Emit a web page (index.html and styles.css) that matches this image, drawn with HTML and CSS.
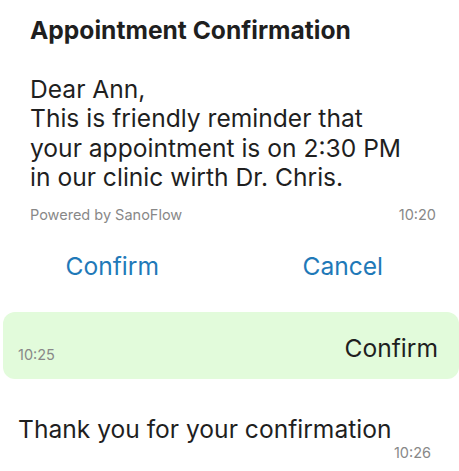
FILE: index.html
```html
<!DOCTYPE html>
<html lang="en">
<head>
  <meta charset="UTF-8">
  <title>Appointment Confirmation</title>
  <link rel="stylesheet" href="styles.css">
</head>
<body>
  <div class="card">
    <h2 class="title">Appointment Confirmation</h2>
    <p class="message">Dear Ann,<br>This is friendly reminder that<br>your appointment is on 2:30 PM<br>in our clinic wirth Dr. Chris.</p>
    <div class="meta">
      <span>Powered by SanoFlow</span>
      <span>10:20</span>
    </div>
  </div>

  <div class="actions">
    <button class="action">Confirm</button>
    <button class="action">Cancel</button>
  </div>

  <div class="reply">
    <span class="time">10:25</span>
    <span class="reply-text">Confirm</span>
  </div>

  <div class="answer">
    <div class="answer-text">Thank you for your confirmation</div>
    <div class="answer-time">10:26</div>
  </div>
</body>
</html>
```

FILE: styles.css
```css
body {
  margin: 0;
  font-family: Inter, "Liberation Sans", sans-serif;
  color: #1f1f1f;
  background: #fff;
}
.card {
  padding: 15px 23px 0 30px;
}
.title {
  margin: 0;
  font-size: 24.6px;
  font-weight: 700;
  line-height: 30px;
}
.message {
  margin: 30px 0 0;
  font-size: 24.6px;
  line-height: 29.3px;
}
.meta {
  display: flex;
  justify-content: space-between;
  margin-top: 14px;
  font-size: 14.5px;
  color: #888;
}
.actions {
  display: flex;
  margin-top: 20px;
  padding-right: 4px;
}
.action {
  flex: 1;
  background: none;
  border: none;
  font-family: inherit;
  font-size: 24.6px;
  color: #1f79b8;
  padding: 8px 0;
}
.action:first-child {
  padding-right: 6px;
}
.reply {
  display: flex;
  justify-content: space-between;
  align-items: flex-end;
  margin: 23px 0 0 3px;
  padding: 21px 21px 16px 15px;
  background: #e2fbdb;
  border-radius: 12px;
}
.time {
  font-size: 14.5px;
  color: #888;
}
.reply-text {
  font-size: 24.6px;
}
.answer {
  padding: 35px 28px 0 18px;
}
.answer-text {
  font-size: 24.6px;
}
.answer-time {
  text-align: right;
  font-size: 14.5px;
  color: #888;
}
```
